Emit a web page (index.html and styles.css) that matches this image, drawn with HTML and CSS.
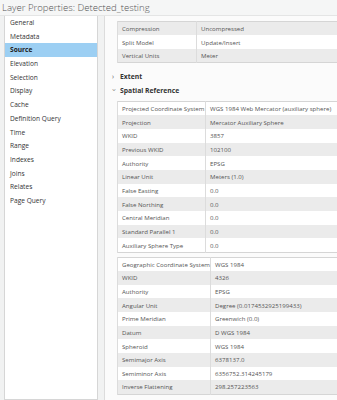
FILE: index.html
```html
<!DOCTYPE html>
<html lang="en">
<head>
  <meta charset="UTF-8" />
  <title>Layer Properties: Detected_testing</title>
  <link rel="stylesheet" href="styles.css">
</head>
<body>
  <div class="title">Layer Properties: Detected_testing</div>

  <div class="main">
    <ul class="nav">
      <li>General</li>
      <li>Metadata</li>
      <li class="active">Source</li>
      <li>Elevation</li>
      <li>Selection</li>
      <li>Display</li>
      <li>Cache</li>
      <li>Definition Query</li>
      <li>Time</li>
      <li>Range</li>
      <li>Indexes</li>
      <li>Joins</li>
      <li>Relates</li>
      <li>Page Query</li>
    </ul>

    <div class="pane">
      <table class="props first">
        <tr><td>Compression</td><td>Uncompressed</td></tr>
        <tr><td>Split Model</td><td>Update/Insert</td></tr>
        <tr><td>Vertical Units</td><td>Meter</td></tr>
      </table>

      <div class="section closed"><span class="arrow">&#8250;</span>Extent</div>
      <div class="section"><span class="arrow down">&#8250;</span>Spatial Reference</div>

      <table class="props pcs">
        <tr><td>Projected Coordinate System</td><td>WGS 1984 Web Mercator (auxiliary sphere)</td></tr>
        <tr><td>Projection</td><td>Mercator Auxiliary Sphere</td></tr>
        <tr><td>WKID</td><td>3857</td></tr>
        <tr><td>Previous WKID</td><td>102100</td></tr>
        <tr><td>Authority</td><td>EPSG</td></tr>
        <tr><td>Linear Unit</td><td>Meters (1.0)</td></tr>
        <tr><td>False Easting</td><td>0.0</td></tr>
        <tr><td>False Northing</td><td>0.0</td></tr>
        <tr><td>Central Meridian</td><td>0.0</td></tr>
        <tr><td>Standard Parallel 1</td><td>0.0</td></tr>
        <tr><td>Auxiliary Sphere Type</td><td>0.0</td></tr>
      </table>

      <table class="props gcs">
        <tr><td>Geographic Coordinate System</td><td>WGS 1984</td></tr>
        <tr><td>WKID</td><td>4326</td></tr>
        <tr><td>Authority</td><td>EPSG</td></tr>
        <tr><td>Angular Unit</td><td>Degree (0.0174532925199433)</td></tr>
        <tr><td>Prime Meridian</td><td>Greenwich (0.0)</td></tr>
        <tr><td>Datum</td><td>D WGS 1984</td></tr>
        <tr><td>Spheroid</td><td>WGS 1984</td></tr>
        <tr><td>Semimajor Axis</td><td>6378137.0</td></tr>
        <tr><td>Semiminor Axis</td><td>6356752.314245179</td></tr>
        <tr><td>Inverse Flattening</td><td>298.257223563</td></tr>
      </table>
    </div>
  </div>
</body>
</html>
```

FILE: styles.css
```css
* {
  box-sizing: border-box;
}
body {
  margin: 0;
  font-family: 'Open Sans', 'Noto Sans', sans-serif;
  background: #f1f2f2;
  color: #444;
  height: 400px;
  overflow: hidden;
}
.title {
  height: 16px;
  padding-left: 2px;
  font-size: 9.6px;
  font-weight: 300;
  line-height: 15px;
  color: #555;
  background: #f5f6f6;
  border-bottom: 1px solid #e4e5e5;
}
.main {
  display: flex;
  height: 384px;
}
.nav {
  list-style: none;
  margin: 0 6px 0 4px;
  padding: 0;
  width: 94px;
  background: #fff;
  border: 1px solid #d6d6d6;
  border-top: none;
  font-size: 6.6px;
}
.nav li {
  height: 13.7px;
  line-height: 13.7px;
  padding-left: 5px;
  color: #333;
}
.nav li.active {
  background: #9ccff3;
  font-weight: 700;
  color: #222;
}
.pane {
  flex: 1;
  background: #fbfbfb;
  border-left: 1px solid #dcdcdc;
  padding: 5px 0 0 12px;
  font-size: 6.1px;
  overflow: hidden;
}
.props {
  border-collapse: collapse;
  width: 240px;
  border: 1px solid #d5d5d5;
}
.props td {
  height: 13.7px;
  padding: 0 0 0 4px;
  border: 1px solid #dcdcdc;
  border-top: none;
  border-bottom: none;
  white-space: nowrap;
  color: #555;
}
.props tr:nth-child(even) td {
  background: #ebebeb;
}
.props tr:nth-child(odd) td {
  background: #fff;
}
.props.first tr:nth-child(odd) td {
  background: #ebebeb;
}
.props.first tr:nth-child(even) td {
  background: #fff;
}
.props.first td:first-child {
  width: 79px;
}
.props.pcs td:first-child {
  width: 88px;
}
.props.gcs td:first-child {
  width: 93px;
}
.props.pcs {
  margin-top: 3px;
}
.props.gcs {
  margin-top: 4px;
}
.section {
  height: 14px;
  line-height: 14px;
  font-size: 6.8px;
  font-weight: 700;
  color: #333;
  margin-left: -5px;
}
.section.closed {
  margin-top: 7px;
}
.arrow {
  display: inline-block;
  width: 8px;
  font-weight: 400;
  color: #555;
}
.arrow.down {
  transform: rotate(90deg);
  width: 4px;
  margin-right: 4px;
}
```
